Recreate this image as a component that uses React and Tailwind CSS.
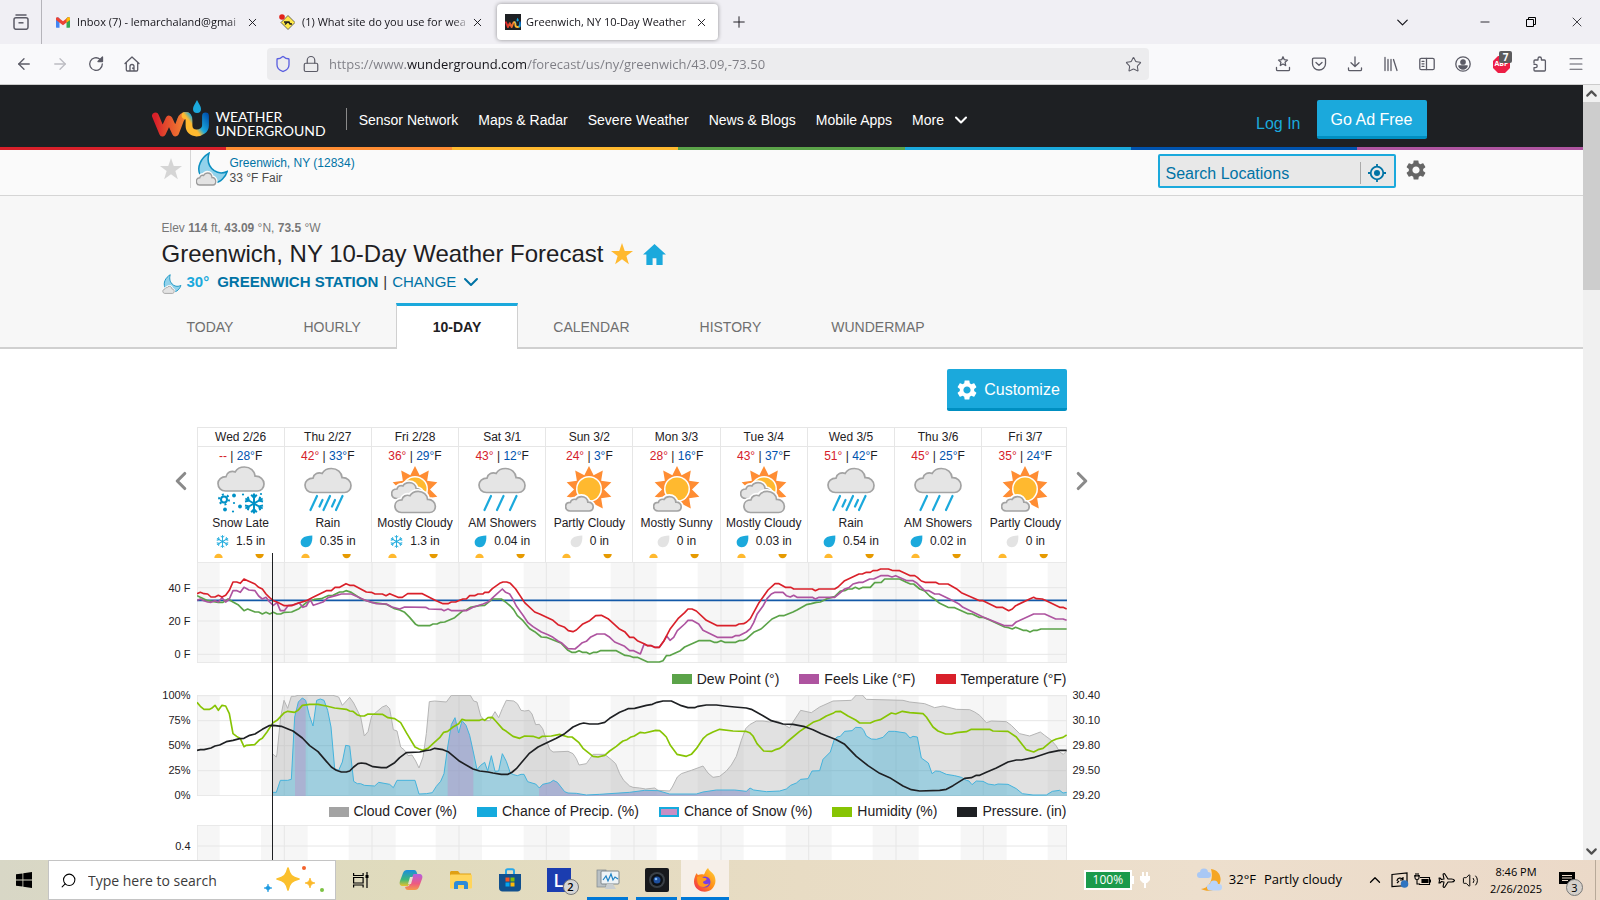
import React from "react";
import {
  ArrowLeft,
  ArrowRight,
  ChevronDown,
  ChevronUp,
  ChevronLeft,
  ChevronRight,
  Lock,
  Shield,
  Star,
  X,
  Plus,
  Minus,
  Menu,
  Plane,
  Volume2,
  Search,
} from "lucide-react";

const navLinks = ["Sensor Network", "Maps & Radar", "Severe Weather", "News & Blogs", "Mobile Apps"];
const pageTabs = ["TODAY", "HOURLY", "10-DAY", "CALENDAR", "HISTORY", "WUNDERMAP"];

const days = [
  { day: "Wed 2/26", high: "--", low: "28°", icon: "snow", text: "Snow Late", kind: "flake", amount: "1.5 in" },
  { day: "Thu 2/27", high: "42°", low: "33°", icon: "rain", text: "Rain", kind: "drop", amount: "0.35 in" },
  { day: "Fri 2/28", high: "36°", low: "29°", icon: "cloudy", text: "Mostly Cloudy", kind: "flake", amount: "1.3 in" },
  { day: "Sat 3/1", high: "43°", low: "12°", icon: "showers", text: "AM Showers", kind: "drop", amount: "0.04 in" },
  { day: "Sun 3/2", high: "24°", low: "3°", icon: "partly", text: "Partly Cloudy", kind: "none", amount: "0 in" },
  { day: "Mon 3/3", high: "28°", low: "16°", icon: "partly", text: "Mostly Sunny", kind: "none", amount: "0 in" },
  { day: "Tue 3/4", high: "43°", low: "37°", icon: "cloudy", text: "Mostly Cloudy", kind: "drop", amount: "0.03 in" },
  { day: "Wed 3/5", high: "51°", low: "42°", icon: "rain", text: "Rain", kind: "drop", amount: "0.54 in" },
  { day: "Thu 3/6", high: "45°", low: "25°", icon: "showers", text: "AM Showers", kind: "drop", amount: "0.02 in" },
  { day: "Fri 3/7", high: "35°", low: "24°", icon: "partly", text: "Partly Cloudy", kind: "none", amount: "0 in" },
];

// every series comes in two halves, the second one starts 1380 units to the right
const HALF = 1380;
const parse = (s) => s.trim().split(/\s+/).map((p) => p.split(",").map(Number));
const trace = (first, second) =>
  [...parse(first), ...parse(second).map(([x, y]) => [x + HALF, y])].map((p) => p.join(",")).join(" ");

const temperature = trace(
  "112,133 122,129 133,133 144,134 154,143 166,143 176,138 187,143 198,138 209,123 220,98 231,98 242,102 253,89 264,94 286,104 297,114 308,119 319,134 330,145 341,154 352,158 374,169 396,169 407,164 440,154 460,144 500,124 515,124 526,114 540,114 559,103 570,108 582,108 620,128 635,129 646,134 668,134 679,139 690,133 715,144 728,144 744,133 788,133 825,152 850,163 865,163 875,158 888,158 900,153 910,149 920,149 930,139 945,139 955,134 970,134 975,129 987,129 998,118 1020,102 1030,98 1041,98 1052,102 1068,119 1095,160 1125,188 1140,194 1180,213 1195,226 1215,234 1226,244 1240,247 1250,242 1268,225 1290,214 1308,199 1325,198 1345,208 1378,238 1395,247",
  "30,264 42,264 53,274 75,284 84,289 95,289 105,294 119,294 132,276 152,238 175,208 195,190 205,179 217,179 230,185 260,213 293,229 348,229 358,224 372,223 381,218 392,208 418,160 445,122 466,103 478,103 497,114 514,114 522,119 578,119 587,124 598,119 645,119 655,113 675,94 718,74 728,74 740,69 752,69 760,64 774,63 783,59 806,59 817,63 840,64 872,79 885,79 893,84 905,95 916,99 948,99 958,104 985,104 1010,118 1025,130 1080,154 1090,154 1130,174 1148,174 1167,184 1178,179 1188,169 1230,149 1242,144 1250,148 1268,149 1280,154 1320,174 1330,174 1341,179"
);
const feelsLike = trace(
  "112,153 122,149 133,154 144,158 154,159 166,154 176,158 187,145 198,158 209,149 220,124 232,124 242,129 253,114 268,122 286,124 297,140 308,149 319,144 330,158 341,168 352,160 362,184 374,184 385,169 405,166 418,160 430,174 440,170 451,150 461,168 490,158 505,145 528,139 545,134 575,134 620,154 650,163 680,164 697,173 720,179 735,173 798,174 808,179 845,180 853,184 865,179 876,184 920,184 940,174 970,164 985,158 1010,135 1028,119 1038,129 1050,134 1060,150 1070,170 1090,198 1105,220 1120,232 1145,248 1165,256 1180,264 1195,275 1205,280 1225,298 1246,299 1258,289 1268,280 1280,276 1292,264 1312,254 1335,254 1348,262 1365,278 1395,291",
  "30,304 42,304 62,314 73,285 84,289 95,289 105,294 119,294 132,276 141,260 151,273 162,264 173,244 195,224 205,213 217,213 237,224 250,243 293,264 338,264 347,259 358,259 380,248 392,238 402,220 412,195 430,170 442,148 455,134 466,129 490,129 500,139 512,143 522,138 532,144 578,144 587,149 598,144 645,144 675,119 688,115 700,104 718,99 730,99 750,89 762,89 783,79 806,79 817,83 828,79 862,94 880,94 890,100 915,124 928,124 945,134 958,134 1000,154 1018,164 1030,174 1090,203 1155,229 1178,229 1188,219 1242,194 1275,194 1308,209 1330,209 1341,213"
);
const dewPoint = trace(
  "112,139 122,144 144,154 176,159 190,159 205,149 220,158 235,166 253,184 264,179 286,188 297,188 308,194 319,189 330,194 341,189 352,194 363,194 374,189 396,188 418,178 440,160 465,150 485,148 505,139 520,138 540,128 550,128 559,124 575,129 605,149 635,159 680,165 705,178 720,182 735,189 750,204 768,225 776,229 810,229 820,224 832,224 843,219 855,218 885,205 910,184 920,182 932,174 960,169 975,168 998,149 1025,149 1040,160 1052,170 1062,181 1073,199 1090,214 1110,238 1125,247 1145,263 1160,264 1205,282 1225,303 1236,309 1248,309 1258,304 1268,309 1280,309 1290,314 1302,309 1312,309 1322,304 1370,304 1395,318",
  "18,318 30,320 40,324 53,324 84,338 119,338 130,334 140,319 152,318 182,304 195,293 237,274 272,274 283,279 293,279 304,274 315,279 348,279 358,274 372,273 381,268 402,249 424,239 457,209 478,199 492,199 520,188 532,182 560,166 575,163 590,159 602,158 625,147 645,142 662,125 675,124 685,119 697,119 707,114 718,119 730,114 752,114 765,100 785,99 795,89 840,89 860,99 872,104 882,104 900,119 915,125 930,140 948,152 960,162 985,174 1005,175 1045,193 1058,194 1078,204 1090,204 1105,210 1155,233 1167,235 1178,239 1188,234 1210,243 1220,243 1231,248 1242,243 1253,243 1264,239 1341,239"
);
const cloudCover = trace(
  "338,220 350,230 352,220 363,110 373,60 384,84 395,48 405,48 415,45 520,45 537,50 548,75 570,51 582,68 603,110 614,167 625,154 636,107 668,80 680,75 690,85 701,148 712,152 723,200 734,209 745,226 757,224 768,242 778,263 790,230 800,160 809,64 825,62 860,65 875,45 932,45 942,62 952,65 963,107 975,121 990,121 1006,94 1017,112 1028,85 1040,60 1062,62 1073,70 1084,90 1095,92 1108,90 1117,101 1128,133 1139,132 1149,145 1160,178 1170,207 1180,215 1225,213 1240,220 1250,235 1258,254 1280,250 1300,222 1335,222 1355,238 1368,250 1380,280 1392,300 1410,317",
  "40,321 60,323 78,326 105,323 115,330 150,332 158,320 173,290 185,280 215,270 250,257 265,278 280,291 300,288 320,272 335,254 350,228 365,180 378,145 390,133 410,122 430,122 450,125 470,122 480,125 510,143 520,125 543,90 575,97 600,80 640,62 695,60 710,44 728,44 740,57 850,60 870,65 915,70 945,82 970,77 1010,87 1050,88 1065,95 1080,105 1100,127 1115,122 1160,124 1175,135 1200,160 1230,167 1262,155 1275,165 1295,180 1310,197 1320,215 1331,222 1341,212"
);
const precip = trace(
  "338,336 350,336 362,300 384,300 395,297 405,110 416,65 428,53 438,60 449,105 460,137 471,60 482,56 493,60 504,90 514,140 525,265 537,270 548,245 558,195 570,197 582,303 593,310 603,310 614,315 645,317 657,306 690,312 701,322 712,300 766,300 778,341 800,340 818,337 830,318 843,303 853,280 864,200 875,133 886,112 897,158 907,121 919,135 930,165 941,215 952,268 963,255 975,246 984,272 995,226 1006,273 1017,272 1028,220 1040,243 1052,278 1062,283 1073,286 1084,282 1093,282 1104,304 1117,308 1128,311 1139,323 1149,312 1171,307 1181,300 1193,306 1215,334 1225,338 1250,339 1280,344 1320,342 1410,336",
  "75,330 115,331 150,341 230,341 250,335 290,329 345,329 380,333 391,323 402,329 440,334 480,332 500,326 513,315 530,308 543,297 565,295 577,272 600,271 610,237 632,215 643,180 652,170 662,168 675,153 697,151 708,141 725,142 732,150 740,167 755,176 770,177 790,171 807,153 825,153 858,158 871,173 880,168 893,170 905,233 926,248 937,280 948,272 960,273 980,282 1005,286 1025,291 1040,300 1048,302 1057,313 1070,302 1090,303 1105,311 1125,314 1135,311 1165,312 1190,325 1208,340 1240,344 1280,344 1298,333 1320,330 1330,338 1341,336"
);
const humidity = trace(
  "112,66 122,78 133,87 150,87 156,84 166,75 176,90 187,75 198,77 209,100 220,160 231,168 242,175 253,199 260,195 285,193 300,178 308,174 322,155 340,127 352,120 374,97 384,93 405,96 416,89 428,75 450,72 475,72 500,77 525,83 560,87 570,92 580,93 592,103 603,107 614,107 625,101 668,102 685,112 705,115 723,127 740,157 766,200 778,206 790,210 805,204 820,190 840,172 852,156 864,153 880,140 897,130 907,117 918,120 960,120 968,117 975,120 985,112 998,111 1008,122 1030,147 1040,153 1060,168 1080,174 1095,167 1120,168 1138,174 1148,168 1175,167 1200,162 1225,170 1237,170 1258,187 1270,204 1300,228 1315,230 1335,225 1350,212 1370,198 1382,188",
  "10,182 22,178 32,171 44,167 62,156 75,158 108,150 120,151 130,160 140,170 152,195 172,222 200,228 215,222 230,205 250,175 262,164 280,155 300,147 340,152 378,153 390,157 400,167 412,190 432,212 457,213 470,207 480,204 492,195 502,185 540,153 555,143 580,126 600,119 620,107 640,99 648,94 662,93 685,107 708,119 720,128 752,128 765,122 782,118 815,98 828,101 848,93 870,97 910,100 920,110 940,140 955,152 978,161 995,161 1010,157 1040,154 1055,147 1110,147 1120,152 1165,153 1190,170 1220,208 1242,215 1255,208 1270,204 1295,183 1310,176 1330,171 1341,164"
);
const pressure = trace(
  "112,210 122,208 133,208 154,203 166,197 180,194 200,184 220,180 240,175 253,174 270,165 286,161 308,147 328,136 341,135 365,138 385,146 400,152 428,173 450,196 475,214 500,243 515,260 530,270 545,275 560,275 570,272 582,260 595,250 605,248 620,250 640,259 665,262 680,262 705,247 720,232 740,217 780,215 800,210 812,209 825,204 850,208 865,214 900,243 940,266 960,272 985,275 1000,278 1025,282 1045,282 1058,275 1070,265 1085,247 1108,220 1135,200 1160,188 1190,174 1215,160 1240,140 1260,131 1272,128 1290,131 1315,131 1335,126 1350,114 1380,96",
  "15,90 25,85 45,84 80,75 98,72 112,66 130,62 155,62 185,76 205,82 225,82 235,78 260,74 290,74 315,77 345,80 380,83 395,87 430,106 455,121 490,131 520,132 555,139 580,148 605,160 650,178 675,192 710,228 745,256 780,279 810,292 850,317 875,328 900,332 960,330 980,327 1000,316 1035,294 1055,292 1070,285 1080,285 1100,276 1130,263 1165,245 1190,239 1205,239 1245,231 1290,216 1320,210 1341,210"
);

const dayLines = [113, 374, 637, 898, 1160, 1423, 1684, 1947, 2209, 2471, 2721];
const daylight = [
  [180, 304], [444, 567], [708, 828], [967, 1092], [1230, 1353],
  [1491, 1614], [1752, 1878], [2016, 2139], [2277, 2403], [2541, 2664],
];

const ChartFrame = ({ top, height, rows, className, label, children }) => (
  <svg
    role="img"
    aria-label={label}
    viewBox={`112 ${top} 2610 ${height}`}
    preserveAspectRatio="none"
    className={"block w-full " + className}
  >
    <rect x="112" y={top} width="2610" height={height} fill="#f6f6f6" />
    {daylight.map(([a, b]) => (
      <rect key={a} x={a} y={top} width={b - a} height={height} fill="#fff" />
    ))}
    <g stroke="#e6e6e6" strokeWidth="3">
      {dayLines.map((x) => (
        <line key={x} x1={x} x2={x} y1={top} y2={top + height} />
      ))}
      {rows.map((y) => (
        <line key={y} x1="112" x2="2722" y1={y} y2={y} />
      ))}
    </g>
    {children}
  </svg>
);

const Line = ({ points, color }) => (
  <polyline points={points} fill="none" stroke={color} strokeWidth="5" strokeLinejoin="round" />
);

const Legend = ({ items, className }) => (
  <ul className={"flex items-center justify-end gap-5 text-[14px] text-[#1e2023] " + className}>
    {items.map((it) => (
      <li key={it.name} className="flex items-center gap-[5px] whitespace-nowrap">
        <span className={"h-[10px] w-5 " + it.swatch}></span>
        {it.name}
      </li>
    ))}
  </ul>
);

const CLOUD =
  "M8.5 25C4 25 1 21.7 1 17.6 1 13.4 4.4 10.6 9 10.6 10 6.4 14 4.4 18.2 5.9 20 2.7 23.6 1 27.4 1c6 0 10.3 4 10.7 9.2C43.3 9.9 47 13.4 47 18c0 4-2.8 7-6.6 7z";

const Cloud = ({ x = 0, y = 0, s = 1, halo }) => (
  <g transform={`translate(${x} ${y}) scale(${s})`}>
    {halo && <path d={CLOUD} fill="#fff" stroke="#fff" strokeWidth={5 / s} />}
    <path d={CLOUD} fill="#e5e5e5" stroke="#a3a3a3" strokeWidth={1.7 / s} />
  </g>
);

const rays = Array.from({ length: 20 }, (_, i) => {
  const r = i % 2 ? 15 : 23.5;
  const a = (i * Math.PI) / 10;
  return `${(24 + r * Math.sin(a)).toFixed(2)},${(23.5 - r * Math.cos(a)).toFixed(2)}`;
}).join(" ");

const Sun = () => (
  <g>
    <polygon points={rays} fill="#ff8d33" />
    <circle cx="24" cy="23" r="13" fill="#fff" />
    <circle cx="24" cy="23" r="11.5" fill="#ffb92f" />
  </g>
);

const Flake = ({ cx, cy, r, w = 1.6, color = "#0091c6" }) => (
  <g transform={`translate(${cx} ${cy})`} stroke={color} strokeWidth={w} fill="none">
    {[0, 60, 120, 180, 240, 300].map((a) => (
      <path key={a} transform={`rotate(${a})`} d={`M0 0V${-r}M${-r * 0.28} ${-r * 0.88}L0 ${-r * 0.58}L${r * 0.28} ${-r * 0.88}`} />
    ))}
  </g>
);

const WeatherIcon = ({ name }) => (
  <svg viewBox="0 0 48 48" className="mx-auto block h-12 w-12" aria-hidden="true">
    {name === "snow" && (
      <>
        <Cloud />
        <Flake cx={37} cy={37.5} r={10} w={2} />
        <circle cx="7" cy="33.5" r="3" fill="none" stroke="#0091c6" strokeWidth="2" />
        <circle cx="7" cy="33.5" r="5" fill="none" stroke="#0091c6" strokeWidth="2" strokeDasharray="2 3.2" />
        <g fill="#0091c6">
          <circle cx="17" cy="29.5" r="1.9" />
          <circle cx="23" cy="40.5" r="1.9" />
          <circle cx="8" cy="43.5" r="1.9" />
          <circle cx="17" cy="37" r="1.1" />
          <circle cx="26" cy="28.5" r="1.1" />
          <circle cx="16" cy="45.5" r="1.1" />
          <circle cx="44" cy="28" r="1.1" />
        </g>
      </>
    )}
    {name === "rain" && (
      <>
        <Cloud y={1.5} />
        <path
          d="M13 30L6.5 44M26 30L19.5 44M38.5 30L32 44M18.500 34L15.500 40.500M31 34L28 40.500"
          stroke="#1ba9dc"
          strokeWidth="2.2"
          strokeLinecap="round"
        />
      </>
    )}
    {name === "showers" && (
      <>
        <Cloud y={1.5} />
        <path d="M13 30L6.5 44M25.500 30L19 44M38.500 30L32 44" stroke="#1ba9dc" strokeWidth="2.2" strokeLinecap="round" />
      </>
    )}
    {name === "partly" && (
      <>
        <Sun />
        <Cloud x={0} y={30} s={0.6} halo />
      </>
    )}
    {name === "cloudy" && (
      <>
        <Sun />
        <Cloud x={0} y={16} s={0.66} halo />
        <Cloud x={3} y={24.5} s={0.88} halo />
      </>
    )}
  </svg>
);

const PrecipIcon = ({ kind }) => (
  <svg viewBox="0 0 13 13" className="h-[13px] w-[13px]" aria-hidden="true">
    {kind === "flake" ? (
      <Flake cx={6.5} cy={6.5} r={6.4} w={0.9} color="#1ba9dc" />
    ) : (
      <path
        d="M12.300 .6C12.500 4 12.300 7.500 10.200 10.300 8.500 12.400 5 13 2.500 11.300.3 9.500 0 6 2 3.800 4.500 1.200 8.500.6 12.300.6z"
        fill={kind === "drop" ? "#1ba9dc" : "#e3e3e3"}
      />
    )}
  </svg>
);

const Moon = ({ className }) => (
  <svg viewBox="0 0 32 34" className={className} aria-hidden="true">
    <path
      d="M13 1.200C5 6 .5 15 4 22.500c4.500 9 17 10.500 22.500 4.500 2-2 4-5 4.700-7.500-4.700 2.200-9 2-13-.8C12.500 14.500 11 8 13 1.200z"
      fill="#92d2eb"
      stroke="#0c8fc0"
      strokeWidth="1.500"
    />
    <g transform="translate(0 20.500) scale(.42 .5)">
      <path d={CLOUD} fill="#f7f7f7" stroke="#fafafa" strokeWidth="9" />
      <path d={CLOUD} fill="#e3e3e3" stroke="#9b9b9b" strokeWidth="3" />
    </g>
  </svg>
);

const Gear = ({ className }) => (
  <svg viewBox="2 2 20 20" className={className} aria-hidden="true">
    <path
      fill="currentColor"
      d="M19.140 12.940c.04-.3.060-.610.060-.940s-.020-.640-.070-.940l2.030-1.580c.180-.140.230-.410.120-.610l-1.920-3.320c-.120-.220-.370-.290-.590-.220l-2.390.960c-.5-.380-1.030-.7-1.620-.940l-.360-2.540c-.040-.240-.240-.410-.480-.410h-3.840c-.240 0-.430.170-.470.410l-.360 2.540c-.590.240-1.130.570-1.620.940l-2.390-.960c-.220-.080-.470 0-.590.220L2.740 8.870c-.120.210-.080.470.120.610l2.030 1.580c-.050.3-.090.630-.090.940s.020.640.070.940l-2.030 1.580c-.180.140-.230.410-.120.610l1.920 3.320c.120.220.370.290.590.220l2.390-.960c.5.380 1.030.7 1.620.940l.360 2.540c.050.240.240.410.480.410h3.840c.240 0 .440-.170.470-.410l.360-2.540c.590-.240 1.130-.560 1.620-.940l2.390.960c.220.080.470 0 .590-.220l1.920-3.320c.120-.220.070-.470-.120-.610l-2.010-1.580zM12 15.600c-1.980 0-3.600-1.620-3.600-3.600s1.620-3.600 3.600-3.600 3.600 1.620 3.600 3.600-1.620 3.600-3.600 3.600z"
    />
  </svg>
);

const StarShape = ({ className }) => (
  <svg viewBox="0 0 24 24" className={className} aria-hidden="true">
    <path fill="currentColor" d="M12 0l3 8.700h9l-7.200 5.400 2.700 9L12 17.700l-7.500 5.400 2.700-9L0 8.700h9z" />
  </svg>
);

const WuMark = ({ className }) => (
  <svg viewBox="0 0 57 37" className={className} aria-hidden="true">
    <defs>
      <linearGradient id="wu-w" x1="0" x2="1">
        <stop offset="0" stopColor="#d9202a" />
        <stop offset=".25" stopColor="#e0402c" />
        <stop offset="1" stopColor="#f58a33" />
      </linearGradient>
      <linearGradient id="wu-u" gradientUnits="userSpaceOnUse" x1="34" x2="55" y1="30" y2="14">
        <stop offset="0" stopColor="#ffb92f" />
        <stop offset=".3" stopColor="#ffb92f" />
        <stop offset=".5" stopColor="#1ba9dc" />
        <stop offset="1" stopColor="#0053ae" />
      </linearGradient>
    </defs>
    <g fill="none" strokeLinecap="round" strokeLinejoin="round" strokeWidth="6.800">
      <path d="M3.500 16l7 17 6.500-14 6.500 14 5-13c1-3 3-4.500 6-4.500" stroke="url(#wu-w)" />
      <path d="M33 15.500c3 0 4 2 4 5v5c0 4.500 3 7.500 7.500 7.500s9-3 9-7.500V16" stroke="url(#wu-u)" />
    </g>
    <path d="M45 0c2 4 4 6.500 4 9a4 4 0 0 1-8 0c0-2.500 2-5 4-9z" fill="#1ba9dc" />
  </svg>
);

const BrowserTabs = () => (
  <header className="flex h-11 shrink-0 items-stretch bg-[#f0eff4] text-[11px] text-[#15141a]">
    <button aria-label="Recent browsing" className="flex w-[42px] items-center justify-center border-r border-[#b5b4ba]">
      <svg viewBox="0 0 16 16" className="h-4 w-4" fill="none" stroke="#5b5b66" strokeWidth="1.500">
        <path d="M3 1h10" strokeLinecap="round" />
        <rect x="1" y="3.800" width="14" height="11.500" rx="2" />
        <path d="M5.500 8.800h5" />
      </svg>
    </button>
    <div className="flex w-[225px] items-center pl-[14px]">
      <svg viewBox="0 0 16 12" className="h-[11px] w-[14px] shrink-0">
        <path d="M0 1.500L2.500 0 4 1v11H1a1 1 0 0 1-1-1z" fill="#4285f4" />
        <path d="M12 1l1.500-1L16 1.500V11a1 1 0 0 1-1 1h-3z" fill="#34a853" />
        <path d="M0 1.500C0 0 1.500-.3 2.500.4L8 4.500 13.500.4C14.500-.3 16 0 16 1.500V3L8 9 0 3z" fill="#ea4335" />
        <path d="M12 1.500l1.500-1.100C14.500-.3 16 0 16 1.500V3l-4 3z" fill="#fbbc04" />
      </svg>
      <span className="ml-[7px] w-[168px] overflow-hidden whitespace-nowrap [mask-image:linear-gradient(to_right,black_90%,transparent)]">
        Inbox (7) - lemarchaland@gmai
      </span>
      <button aria-label="Close tab" className="ml-px">
        <X size={13} strokeWidth={1.700} />
      </button>
    </div>
    <div className="flex w-[230px] items-center pl-3">
      <svg viewBox="0 0 16 16" className="h-4 w-4 shrink-0">
        <path d="M9 1.500l7 7-7 7-7-7z" fill="#ffe94a" stroke="#333" strokeWidth=".7" />
        <path d="M5 8h5l1 2h2M6 10.500l2-2" stroke="#222" strokeWidth="1.500" />
        <circle cx="3" cy="3" r="2.800" fill="#e2231a" />
      </svg>
      <span className="ml-[7px] w-[168px] overflow-hidden whitespace-nowrap [mask-image:linear-gradient(to_right,black_90%,transparent)]">
        (1) What site do you use for wea
      </span>
      <button aria-label="Close tab" className="ml-px">
        <X size={13} strokeWidth={1.700} />
      </button>
    </div>
    <div className="my-1 flex w-[221px] items-center rounded bg-white pl-2 shadow-[0_0_4px_rgba(0,0,0,0.4)]">
      <span className="flex h-4 w-4 shrink-0 items-end justify-center bg-[#1e2023]">
        <WuMark className="h-[14px] w-4" />
      </span>
      <span className="ml-[5px] w-[168px] overflow-hidden whitespace-nowrap [mask-image:linear-gradient(to_right,black_92%,transparent)]">
        Greenwich, NY 10-Day Weather
      </span>
      <button aria-label="Close tab" className="ml-px">
        <X size={13} strokeWidth={1.700} />
      </button>
    </div>
    <button aria-label="New tab" className="ml-3">
      <Plus size={18} strokeWidth={1.250} />
    </button>
    <div className="ml-auto flex items-center">
      <button aria-label="List all tabs" className="mr-[50px]">
        <ChevronDown size={19} strokeWidth={1.500} />
      </button>
      <button aria-label="Minimize" className="flex w-[46px] justify-center">
        <Minus size={14} strokeWidth={1.500} />
      </button>
      <button aria-label="Restore" className="flex w-[46px] justify-center">
        <svg viewBox="0 0 10 10" className="h-[10px] w-[10px]" fill="none" stroke="#000">
          <path d="M.5 2.500h7v7h-7zM2.500 2.500v-2h7v7h-2" />
        </svg>
      </button>
      <button aria-label="Close window" className="flex w-[46px] justify-center">
        <X size={16} strokeWidth={1.200} />
      </button>
    </div>
  </header>
);

const ToolIcon = ({ label, children }) => (
  <button aria-label={label} className="relative flex w-9 justify-center">
    <svg viewBox="0 0 16 16" className="h-4 w-4" fill="none" stroke="#5b5b66" strokeWidth="1.300" strokeLinecap="round" strokeLinejoin="round">
      {children}
    </svg>
  </button>
);

const Toolbar = () => (
  <div className="flex h-[41px] shrink-0 items-center border-b border-[#ccc] bg-[#f9f9fb] pr-[6px] pl-[6px] text-[#5b5b66]">
    <button aria-label="Back" className="flex w-9 justify-center"><ArrowLeft size={18} strokeWidth={1.750} /></button>
    <button aria-label="Forward" className="flex w-9 justify-center text-[#bcbcc2]"><ArrowRight size={18} strokeWidth={1.750} /></button>
    <ToolIcon label="Reload">
      <path d="M14.300 8A6.300 6.300 0 1 1 12 3.200" />
      <path d="M14.500 1v4.500H10z" fill="#5b5b66" />
    </ToolIcon>
    <ToolIcon label="Home">
      <path d="M1 7.500L8 1l7 6.500M2.300 6.500v7.300c0 .8.5 1.200 1.200 1.200h9c.7 0 1.200-.4 1.200-1.200V6.500M6 15v-4.500a2 2 0 0 1 4 0V15M8.800 12v.5" />
    </ToolIcon>
    <div className="ml-[117px] flex h-8 w-[882px] shrink items-center rounded bg-[#ececee] pl-[7px] pr-[7px]">
      <Shield size={18} strokeWidth={1.750} className="text-[#5a5fe0]" />
      <Lock size={18} strokeWidth={1.600} className="ml-[10px]" />
      <input
        aria-label="Address"
        defaultValue="https://www.wunderground.com/forecast/us/ny/greenwich/43.09,-73.50"
        className="ml-[9px] h-8 min-w-0 flex-1 bg-linear-[to_right,#7c7c83_78px,#15141a_78px,#15141a_197px,#7c7c83_197px] bg-clip-text text-[13px] text-transparent outline-none"
      />
      <button aria-label="Bookmark"><Star size={17} strokeWidth={1.500} /></button>
    </div>
    <div className="ml-auto flex items-center">
      <ToolIcon label="Bookmarks">
        <path d="M8 .8l1.300 2.900 3.200.4-2.400 2.200.6 3.200L8 8l-2.700 1.500.6-3.200L3.500 4.100l3.200-.4zM1.500 11.500v2c0 .8.400 1.200 1.200 1.200h10.600c.8 0 1.200-.4 1.200-1.200v-2" />
      </ToolIcon>
      <ToolIcon label="Pocket">
        <path d="M2.800 2.200h10.400c.8 0 1.300.5 1.300 1.300v4.200c0 3.500-3 6.300-6.500 6.300S1.500 11.200 1.500 7.700V3.500c0-.8.5-1.300 1.300-1.300zM5 6.500L8 9.300l3-2.800" />
      </ToolIcon>
      <ToolIcon label="Downloads">
        <path d="M8 .8v9.500M4 6.800l4 3.700 4-3.700M1.500 12v1.500c0 .8.500 1.200 1.300 1.200h10.400c.8 0 1.300-.4 1.300-1.200V12" />
      </ToolIcon>
      <ToolIcon label="Library">
        <path d="M2 1.500v13M5 3.500v11M8 3.500v11M10.500 3.500l3.500 11" />
      </ToolIcon>
      <ToolIcon label="Sidebar">
        <rect x=".8" y="2.300" width="14.400" height="11.400" rx="1.500" />
        <path d="M7.500 2.500v11M3 5.300h2M3 7.800h2M3 10.300h2" />
      </ToolIcon>
      <ToolIcon label="Account">
        <circle cx="8" cy="8" r="7.200" />
        <circle cx="8" cy="6" r="2.200" fill="#5b5b66" />
        <path d="M3.800 10h8.400c-.8 2-2.300 3-4.200 3s-3.400-1-4.200-3z" fill="#5b5b66" />
      </ToolIcon>
      <button aria-label="Adblock Plus" className="relative mx-3 flex h-[17px] w-[17px] items-center justify-center">
        <svg viewBox="0 0 17 17" className="absolute h-[17px] w-[17px]">
          <path d="M5 0h7l5 5v7l-5 5H5l-5-5V5z" fill="#ed1e45" />
        </svg>
        <span className="relative text-[7px] font-bold text-white">ABP</span>
        <span className="absolute -top-[5px] left-[6px] h-[12px] w-[13px] rounded-xs bg-[#5c5c5e] text-center text-[10px] leading-[12px] font-bold text-white">7</span>
      </button>
      <ToolIcon label="Extensions">
        <path d="M2 7V5c0-.6.400-1 1-1h3V2.700a1.700 1.700 0 0 1 3.400 0V4h3c.6 0 1 .4 1 1v9c0 .6-.4 1-1 1H3c-.6 0-1-.4-1-1v-2.300h1.500a1.700 1.700 0 0 0 0-3.400H2" />
      </ToolIcon>
      <button aria-label="Menu" className="flex w-9 justify-center"><Menu size={18} strokeWidth={1.400} /></button>
    </div>
  </div>
);

const SiteHeader = () => (
  <>
    <div className="bg-[#1e2023]">
      <div className="mx-auto flex h-[62px] max-w-[1280px] items-center pr-[5px] pt-[6px]">
        <a href="#" className="flex items-start text-white">
          <WuMark className="h-[37px] w-[57px]" />
          <span className="ml-[7px] flex flex-col pt-[10px] text-[14px] leading-[14px] [font-family:Lato,sans-serif]">
            <span>WEATHER</span>
            <span>UNDERGROUND</span>
          </span>
        </a>
        <nav className="ml-[20px] flex h-[22px] items-center gap-5 border-l border-[#8a8a8a] pl-3 pt-[2px] text-[14px] text-white">
          {navLinks.map((n) => (
            <a key={n} href="#" className="whitespace-nowrap">{n}</a>
          ))}
          <button className="flex items-center gap-[7px]">
            More
            <ChevronDown size={20} strokeWidth={2.500} />
          </button>
        </nav>
        <a href="#" className="ml-auto mt-[10px] text-[16px] text-[#1ba9dc]">Log In</a>
        <button className="ml-4 h-[39px] w-[110px] rounded-xs border-b-3 border-[#008fc1] bg-[#1ba9dc] pt-1 text-[16px] text-white">Go Ad Free</button>
      </div>
      <div className="flex h-[3px]">
        <i className="flex-1 bg-[#d9202a]"></i>
        <i className="flex-1 bg-[#ff8d33]"></i>
        <i className="flex-1 bg-[#ffb92f]"></i>
        <i className="flex-1 bg-[#5ba349]"></i>
        <i className="flex-1 bg-[#1ba9dc]"></i>
        <i className="flex-1 bg-[#0053ae]"></i>
        <i className="flex-1 bg-[#ae54a0]"></i>
      </div>
    </div>
    <div className="border-b border-[#d5d5d5] bg-[#fafafa]">
      <div className="mx-auto flex h-[45px] max-w-[1280px] items-start pl-2 pr-[6px]">
        <button aria-label="Favorite" className="mt-2 text-[#d5d5d5]">
          <StarShape className="h-[22px] w-[22px]" />
        </button>
        <div className="ml-2 flex h-[38px] items-center border-l border-[#d5d5d5] pl-[5px]">
          <Moon className="h-[34px] w-8" />
          <div className="ml-[2px] pt-[3px] text-[12px] leading-[15px]">
            <a href="#" className="block text-[#0073a5]">Greenwich, NY (12834)</a>
            <span className="block text-[#4a4a4a]">33 °F Fair</span>
          </div>
        </div>
        <div className="ml-auto mt-1 flex h-[34px] w-[238px] items-center rounded-xs border-2 border-[#1ba9dc] bg-[#e8e8e8]">
          <input
            aria-label="Search Locations"
            placeholder="Search Locations"
            className="h-[30px] w-[200px] pl-[6px] pt-[6px] text-[16px] text-[#0073a5] outline-none placeholder:text-[#0073a5]"
          />
          <button aria-label="Use my location" className="mt-[3px] flex h-[22px] flex-1 items-center justify-center border-l border-[#aaa] text-[#0073a5]">
            <svg viewBox="0 0 18 18" className="h-[18px] w-[18px]" fill="none" stroke="currentColor" strokeWidth="1.800">
              <circle cx="9" cy="9" r="6.300" />
              <circle cx="9" cy="9" r="3" fill="currentColor" stroke="none" />
              <path d="M9 0v3M9 15v3M0 9h3M15 9h3" />
            </svg>
          </button>
        </div>
        <button aria-label="Settings" className="mt-[10px] ml-[10px] text-[#666]">
          <Gear className="h-5 w-5" />
        </button>
      </div>
    </div>
  </>
);

const PageHeader = () => (
  <div className="border-b-2 border-[#d0d0d0] bg-[#f7f7f7] pt-6">
    <div className="mx-auto max-w-[1280px]">
      <p className="pl-[10px] text-[12px] leading-4 text-[#777]">
        Elev <b>114</b> ft, <b>43.09</b> °N, <b>73.5</b> °W
      </p>
      <h1 className="flex items-center pl-[10px] pt-1 text-[24px] leading-7 text-[#1e2023]">
        Greenwich, NY 10-Day Weather Forecast
        <StarShape className="ml-2 h-[22px] w-[22px] text-[#ffb92f]" />
        <svg viewBox="0 0 24 22" className="ml-[10px] h-[21px] w-[23px]" aria-hidden="true">
          <path d="M12 0l12 11h-3.500v11H14v-7h-4v7H3.500V11H0z" fill="#1ba9dc" />
        </svg>
      </h1>
      <div className="flex items-center pl-[10px] pt-[2px] text-[15px] leading-5">
        <Moon className="mt-1 h-5 w-5" />
        <b className="ml-[5px] text-[#1ba9dc]">30°</b>
        <a href="#" className="ml-2 font-bold text-[#0073a5]">GREENWICH STATION</a>
        <span className="mx-[5px] text-[#333]">|</span>
        <button className="flex items-center gap-[3px] text-[#0073a5]">
          CHANGE
          <ChevronDown size={24} strokeWidth={2} className="-my-1" />
        </button>
      </div>
      <nav className="mt-[9px] -mb-[2px] flex h-[46px] text-[14px] leading-[44px]">
        {pageTabs.map((t) =>
          t === "10-DAY" ? (
            <a key={t} href="#" className="border-x border-t-3 border-x-[#d0d0d0] border-t-[#1ba9dc] bg-white px-9 leading-[42px] font-bold text-[#1e2023]">{t}</a>
          ) : (
            <a key={t} href="#" className="px-[35px] pt-[2px] text-[#6f6f6f]">{t}</a>
          )
        )}
      </nav>
    </div>
  </div>
);

const SunMarks = () => (
  <svg viewBox="0 0 87 12" preserveAspectRatio="none" className="block h-3 w-full" aria-hidden="true">
    <path d="M16.500 8a4.200 4.200 0 0 1 8.400 0z" fill="#ffb92f" />
    <path d="M58 4a4.200 4.200 0 0 0 8.400 0z" fill="#e69a00" />
  </svg>
);

const ForecastTable = () => (
  <table className="w-[calc(100%+4px)] table-fixed border-collapse border-t border-[#e6e6e6] text-center text-[12px] text-[#1e2023]">
    <thead>
      <tr>
        {days.map((d) => (
          <th key={d.day} className="h-[19px] border border-[#e6e6e6] p-0 leading-[18px] font-normal">{d.day}</th>
        ))}
      </tr>
    </thead>
    <tbody>
      <tr>
        {days.map((d) => (
          <td key={d.day} className="border-x border-[#e6e6e6] p-0 leading-[19px] whitespace-nowrap">
            <span className="text-[#d5202a]">{d.high}</span> | <span className="text-[#0053ae]">{d.low}</span>F
          </td>
        ))}
      </tr>
      <tr>
        {days.map((d) => (
          <td key={d.day} className="border-x border-[#e6e6e6] p-0">
            <WeatherIcon name={d.icon} />
          </td>
        ))}
      </tr>
      <tr>
        {days.map((d) => (
          <td key={d.day} className="border-x border-[#e6e6e6] p-0 leading-[19px] whitespace-nowrap">{d.text}</td>
        ))}
      </tr>
      <tr>
        {days.map((d) => (
          <td key={d.day} className="border-x border-[#e6e6e6] p-0 leading-[17px] whitespace-nowrap">
            <span className="flex items-center justify-center gap-[7px]">
              <PrecipIcon kind={d.kind} />
              {d.amount}
            </span>
          </td>
        ))}
      </tr>
      <tr>
        {days.map((d) => (
          <td key={d.day} className="border-x border-[#e6e6e6] p-0">
            <SunMarks />
          </td>
        ))}
      </tr>
    </tbody>
  </table>
);

const Forecast = () => (
  <main className="mx-auto max-w-[1280px] pl-[10px] pt-5">
    <div className="relative grid max-w-[940px] grid-cols-[35px_minmax(0,1fr)_35px]">
      <div className="col-start-2 mb-4 flex justify-end">
        <button className="flex h-[42px] w-[120px] items-center justify-center gap-[7px] rounded-xs border-b-3 border-[#008fc1] bg-[#1ba9dc] pt-[2px] pl-1 text-[16px] text-white">
          <Gear className="h-5 w-5" />
          Customize
        </button>
      </div>

      <button aria-label="Previous days" className="col-start-1 flex items-center pb-7 pl-1 text-[#8a8a8a]">
        <ChevronLeft size={30} strokeWidth={2.500} />
      </button>
      <div className="overflow-hidden border-r border-[#e6e6e6]">
        <ForecastTable />
      </div>
      <button aria-label="Next days" className="flex items-center pb-7 text-[#8a8a8a]">
        <ChevronRight size={30} strokeWidth={2.500} />
      </button>

      <div className="pr-[6px] pt-[10px] text-right text-[11px] leading-[33px] text-[#1e2023]">
        <p>40 F</p>
        <p>20 F</p>
        <p>0 F</p>
      </div>
      <div>
        <ChartFrame label="Temperature" top={38} height={303} rows={[39, 115, 215, 315, 340]} className="h-[101px]">
          <line x1="112" x2="2722" y1="153" y2="153" stroke="#1359a8" strokeWidth="5" />
          <Line points={dewPoint} color="#5ba349" />
          <Line points={feelsLike} color="#ae54a0" />
          <Line points={temperature} color="#d9202a" />
        </ChartFrame>
        <Legend
          className="h-8"
          items={[
            { name: "Dew Point (°)", swatch: "bg-[#5ba349]" },
            { name: "Feels Like (°F)", swatch: "bg-[#ae54a0]" },
            { name: "Temperature (°F)", swatch: "bg-[#d9202a]" },
          ]}
        />
      </div>
      <div></div>

      <div className="-mt-3 pr-[6px] text-right text-[11px] leading-[25px] text-[#1e2023]">
        <p>100%</p>
        <p>75%</p>
        <p>50%</p>
        <p>25%</p>
        <p>0%</p>
      </div>
      <div>
        <ChartFrame label="Conditions" top={44} height={303} rows={[46, 121, 196, 271, 346]} className="h-[101px]">
          <clipPath id="snow-hours">
            <rect x="406" y="40" width="32" height="310" />
            <rect x="864" y="40" width="77" height="310" />
            <rect x="1138" y="40" width="633" height="310" />
          </clipPath>
          <polygon points={`338,347 ${cloudCover} 2722,347`} fill="#a3a3a3" fillOpacity=".32" />
          <polyline points={cloudCover} fill="none" stroke="#b5b5b5" strokeWidth="3" />
          <polygon points={`338,347 ${precip} 2722,347`} fill="#1ba9dc" fillOpacity=".33" />
          <polygon points={`338,347 ${precip} 2722,347`} fill="#c77fc0" fillOpacity=".33" clipPath="url(#snow-hours)" />
          <polyline points={precip} fill="none" stroke="#45b3dc" strokeWidth="3" />
          <Line points={humidity} color="#87c404" />
          <Line points={pressure} color="#1e2023" />
        </ChartFrame>
        <Legend
          className="h-[29px] pt-[2px]"
          items={[
            { name: "Cloud Cover (%)", swatch: "bg-[#a3a3a3]" },
            { name: "Chance of Precip. (%)", swatch: "bg-[#15aadd]" },
            { name: "Chance of Snow (%)", swatch: "border-2 border-[#15aadd] bg-[#c78fc4]" },
            { name: "Humidity (%)", swatch: "bg-[#87c404]" },
            { name: "Pressure. (in)", swatch: "bg-[#1e2023]" },
          ]}
        />
      </div>
      <div className="-mt-3 pl-[6px] text-[11px] leading-[25px] text-[#1e2023]">
        <p>30.40</p>
        <p>30.10</p>
        <p>29.80</p>
        <p>29.50</p>
        <p>29.20</p>
      </div>

      <div className="pr-[6px] text-right text-[11px] leading-[42px] text-[#1e2023]">0.4</div>
      <ChartFrame label="Precipitation" top={436} height={303} rows={[437, 499, 574, 649, 724]} className="h-[101px]" />

      {/* current time marker, runs through all of the charts */}
      <div className="absolute top-[184px] bottom-0 left-[110px] w-px bg-[#1e2023]"></div>
    </div>
  </main>
);

const Sparkle = ({ x, y, r, color }) => (
  <path
    transform={`translate(${x} ${y}) scale(${r})`}
    d="M0-1C.15-.35.35-.15 1 0 .35.15.15.35 0 1-.15.35-.35.15-1 0-.35-.15-.15-.35 0-1z"
    fill={color}
    stroke={color}
    strokeWidth=".15"
    strokeLinejoin="round"
  />
);

const TaskButton = ({ label, children, state = "w-[49px]" }) => (
  <button aria-label={label} className={"flex h-10 shrink-0 flex-col items-center justify-center " + state}>
    {children}
  </button>
);

const Taskbar = () => (
  <footer className="flex h-10 shrink-0 items-center bg-linear-[to_right,#d8d7c6,#e0dbbd_25%,#e8dcc4_50%,#eddfcd_75%,#ebd9c8] text-black">
    <button aria-label="Start" className="flex w-12 justify-center">
      <svg viewBox="0 0 16 16" className="h-4 w-4">
        <path d="M0 2.300L6.500 1.400v6.200H0zM7.300 1.300L16 0v7.600H7.300zM0 8.400h6.500v6.200L0 13.700zM7.300 8.400H16V16l-8.700-1.300z" />
      </svg>
    </button>
    <label className="flex h-10 w-[288px] items-center border border-[#c4c4c4] bg-white pl-[11px]">
      <Search size={17} strokeWidth={1.500} className="-scale-x-100" />
      <input
        placeholder="Type here to search"
        className="ml-[11px] h-9 w-[176px] text-[14px] outline-none placeholder:text-[#3b3b3b]"
      />
      <svg viewBox="0 0 62 32" className="h-8 w-[62px]">
        <Sparkle x={24} y={15} r={11} color="#fbc02d" />
        <Sparkle x={46} y={19} r={5} color="#fbb829" />
        <Sparkle x={4} y={24} r={4} color="#1e9be0" />
        <circle cx="40" cy="4" r="2" fill="#f4622c" />
        <circle cx="58" cy="26" r="2" fill="#7cc243" />
      </svg>
    </label>
    <TaskButton label="Task View">
      <svg viewBox="0 0 16 16" className="h-4 w-4" fill="none" stroke="#000" strokeWidth="1.200">
        <path d="M.6 1v2.500h9.500V1M.6 5.500h9.500v5.500H.6zM.6 15.500V13h9.500v2.500M14 0v16" />
        <path d="M14 3v3" strokeWidth="3" />
      </svg>
    </TaskButton>
    <TaskButton label="Copilot" state="w-[51px]">
      <svg viewBox="0 0 24 22" className="h-[22px] w-6">
        <defs>
          <linearGradient id="cp-a" x2="0" y2="1">
            <stop stopColor="#1b8ce0" />
            <stop offset=".6" stopColor="#3db87a" />
            <stop offset="1" stopColor="#e9c22c" />
          </linearGradient>
          <linearGradient id="cp-b" x2="0" y2="1">
            <stop stopColor="#b45fe0" />
            <stop offset=".6" stopColor="#ee5a80" />
            <stop offset="1" stopColor="#f59a4a" />
          </linearGradient>
        </defs>
        <path d="M8 1h7c2 0 2.500 1.500 3 3l1 3h-5L9 17H4c-3 0-4-2-3-5L4 4c.8-2 2-3 4-3z" fill="url(#cp-a)" />
        <path d="M16 21H9c-2 0-2.500-1-3-3l4-1 4.500-12H20c3 0 4 2 3 5l-3 8c-.8 2-2 3-4 3z" fill="url(#cp-b)" />
        <path d="M11 8h3l-2 7H9z" fill="#e8e0cf" />
      </svg>
    </TaskButton>
    <TaskButton label="File Explorer">
      <svg viewBox="0 0 22 18" className="h-[18px] w-[22px]">
        <path d="M0 1.500C0 .7.700 0 1.500 0H8l2 2.500h11v4H0z" fill="#e0a013" />
        <rect y="3.500" width="22" height="14" rx="1" fill="#ffd55c" />
        <path d="M4 18v-5c0-2 1-3 3-3h8c2 0 3 1 3 3v5h-4v-4H8v4z" fill="#2f8bd8" />
      </svg>
    </TaskButton>
    <TaskButton label="Microsoft Store">
      <svg viewBox="0 0 24 24" className="h-6 w-6">
        <path d="M8 6V3c0-1 .7-1.700 1.700-1.700h4.600c1 0 1.700.7 1.700 1.700v3" fill="none" stroke="#28a8ea" strokeWidth="2" />
        <path d="M1 6h22v14c0 2-1.500 3.500-3.500 3.500h-15C2.500 23.500 1 22 1 20z" fill="#11508e" />
        <path d="M7.500 9.500h4v4h-4z" fill="#f35325" />
        <path d="M12.500 9.500h4v4h-4z" fill="#81bc06" />
        <path d="M7.500 14.500h4v4h-4z" fill="#05a6f0" />
        <path d="M12.500 14.500h4v4h-4z" fill="#ffba08" />
      </svg>
    </TaskButton>
    <TaskButton label="Lively">
      <span className="relative h-6 w-6 bg-[#1b3db0] text-center text-[18px] leading-6 font-semibold text-white">
        L
        <span className="absolute top-[11px] left-4 h-4 w-4 rounded-full border border-[#777] bg-[#d5d5d5] text-[11px] leading-[14px] text-black">2</span>
      </span>
    </TaskButton>
    <TaskButton label="Performance Monitor" state="mx-1 w-[41px] border-b-3 border-[#0078d7] pt-[3px]">
      <svg viewBox="0 0 24 22" className="h-[22px] w-6">
        <rect x="1" y="1" width="9" height="17" fill="#b9c0c4" stroke="#7f878c" strokeWidth=".7" />
        <rect x="5" y="2" width="18" height="13" rx="1" fill="#eef3f6" stroke="#7f878c" />
        <path d="M7 11l3-4 2 5 3-7 2 6 2-3 3 2" fill="none" stroke="#2083c5" strokeWidth="1.200" />
        <path d="M11 15h6l3 5H9z" fill="#c8cdd0" />
      </svg>
    </TaskButton>
    <TaskButton label="Camera" state="mx-1 w-[41px] border-b-3 border-[#0078d7] pt-[3px]">
      <svg viewBox="0 0 24 24" className="h-6 w-6">
        <rect width="24" height="24" rx="2" fill="#17191c" />
        <circle cx="12" cy="12" r="8" fill="#3a4046" />
        <circle cx="12" cy="12" r="6" fill="#0d1116" />
        <circle cx="12" cy="12" r="3.500" fill="#1d4f9e" />
        <circle cx="11" cy="11" r="1.300" fill="#7db6f2" />
      </svg>
    </TaskButton>
    <TaskButton label="Firefox" state="w-12 border-b-3 border-[#0078d7] bg-[#f6efe8] pt-[3px]">
      <svg viewBox="0 0 24 24" className="h-6 w-6">
        <defs>
          <linearGradient id="ff" x1="1" x2="0" y2="1">
            <stop stopColor="#ffd83a" />
            <stop offset=".5" stopColor="#ff8a16" />
            <stop offset="1" stopColor="#f0235a" />
          </linearGradient>
        </defs>
        <path d="M15 0c1 3 4 4 6 7 3 6 1 11-2 14-4 3.500-10 3.500-14 .5-4-3-5-8-3-13 .5-1.500 1-2.500 2-3.500 0 1 .3 1.500 1 2 2-1 4-1 6-.5C12 5 12.500 2 15 0z" fill="url(#ff)" />
        <circle cx="12" cy="14" r="5.500" fill="#7a3fe0" />
        <path d="M4 9c3-1 5 0 7 1 2 0 3 .5 2.500 1.500C13 13 11 12.500 10 14c0 2 3 3 6 1.500C14 20 7 20 5 16c-.8-2-1-5-1-7z" fill="#ff9a1c" />
      </svg>
    </TaskButton>

    <div className="ml-auto flex items-center">
      <span className="h-5 w-12 border-2 border-white bg-[#1a9a4b] text-center text-[12px] leading-4 text-white">100%</span>
      <span className="h-2 w-[2px] bg-white"></span>
      <svg viewBox="0 0 10 16" className="ml-[6px] h-4 w-[10px]" fill="#fff">
        <path d="M2 0h2v4h2V0h2v4h2v4L7 11H6v5H4v-5H3L0 8V4h2z" />
      </svg>
      <svg viewBox="0 0 25 24" className="ml-[47px] h-6 w-[25px]">
        <path d="M14 1c8 1 11 8 9 14-2 7-11 10-19 6 8-1 13-9 10-20z" fill="#f5a623" />
        <rect x="0" y="4" width="14" height="6" rx="3" fill="#a9c8f5" />
        <circle cx="7" cy="4.500" r="4" fill="#a9c8f5" />
        <rect x="10" y="16" width="15" height="6.500" rx="3.200" fill="#b9d4fa" />
        <circle cx="17" cy="16.500" r="4" fill="#b9d4fa" />
      </svg>
      <span className="ml-[7px] text-[13px] whitespace-nowrap">32°F</span>
      <span className="mx-2 w-[83px] text-[13px] whitespace-nowrap">Partly cloudy</span>
      <button aria-label="Show hidden icons" className="ml-[11px]"><ChevronUp size={18} strokeWidth={1.700} /></button>
      <svg viewBox="0 0 18 16" className="ml-[7px] h-4 w-[18px]" fill="none" stroke="#000" strokeWidth="1.200">
        <path d="M1 2.500L16 1v12.500L1 14.500zM6 9c0-3 4-4 6-1.500M12 5v3H9M6 11l2-2" />
        <circle cx="13.500" cy="12" r="3.800" fill="#2f74c0" stroke="none" />
      </svg>
      <svg viewBox="0 0 17 14" className="ml-[5px] h-[14px] w-[17px]" fill="none" stroke="#000" strokeWidth="1.100">
        <path d="M1 2v3c0 2 4 2 4 0V2M0 3h6M3 6v5h3M2 0v3M4 0v3M6 4.500h9.500v7H5" />
        <path d="M8 6.500h6v3H8z" fill="#000" />
        <path d="M16.500 6.500v3" />
      </svg>
      <Plane size={17} strokeWidth={1.600} className="ml-[6px] rotate-45" />
      <Volume2 size={17} strokeWidth={1.400} className="ml-2" />
      <p className="ml-[6px] w-[62px] text-center text-[11px] leading-[17px] whitespace-nowrap">
        8:46 PM
        <br />
        2/26/2025
      </p>
      <button aria-label="Notifications" className="relative ml-3 h-4 w-4">
        <svg viewBox="0 0 16 16" className="h-4 w-4">
          <path d="M0 0h16v12h-5l-3 4v-4H0z" />
          <path d="M3 3.500h10M3 6h10M3 8.500h6" stroke="#ebd9c8" />
        </svg>
        <span className="absolute top-[7px] left-[7px] h-[17px] w-[17px] rounded-full border border-[#777] bg-[#d5d0ca] text-[11px] leading-[15px]">3</span>
      </button>
      <span className="ml-5 mr-1 h-10 w-px bg-[#b8a999]"></span>
    </div>
  </footer>
);

const App = () => (
  <div className="flex h-screen flex-col overflow-hidden [font-family:'Open_Sans','Noto_Sans',sans-serif]">
    <BrowserTabs />
    <Toolbar />
    <div className="flex min-h-0 flex-1">
      <div className="min-w-0 flex-1 overflow-hidden bg-white [font-family:'Liberation_Sans',Arial,sans-serif]">
        <SiteHeader />
        <PageHeader />
        <Forecast />
      </div>
      <div className="flex w-[17px] shrink-0 flex-col items-center bg-[#f0f0f0] text-[#505050]">
        <ChevronUp size={17} strokeWidth={3} />
        <div className="h-[188px] w-full bg-[#cdcdcd]"></div>
        <ChevronDown size={17} strokeWidth={3} className="mt-auto" />
      </div>
    </div>
    <Taskbar />
  </div>
);

export default App;
